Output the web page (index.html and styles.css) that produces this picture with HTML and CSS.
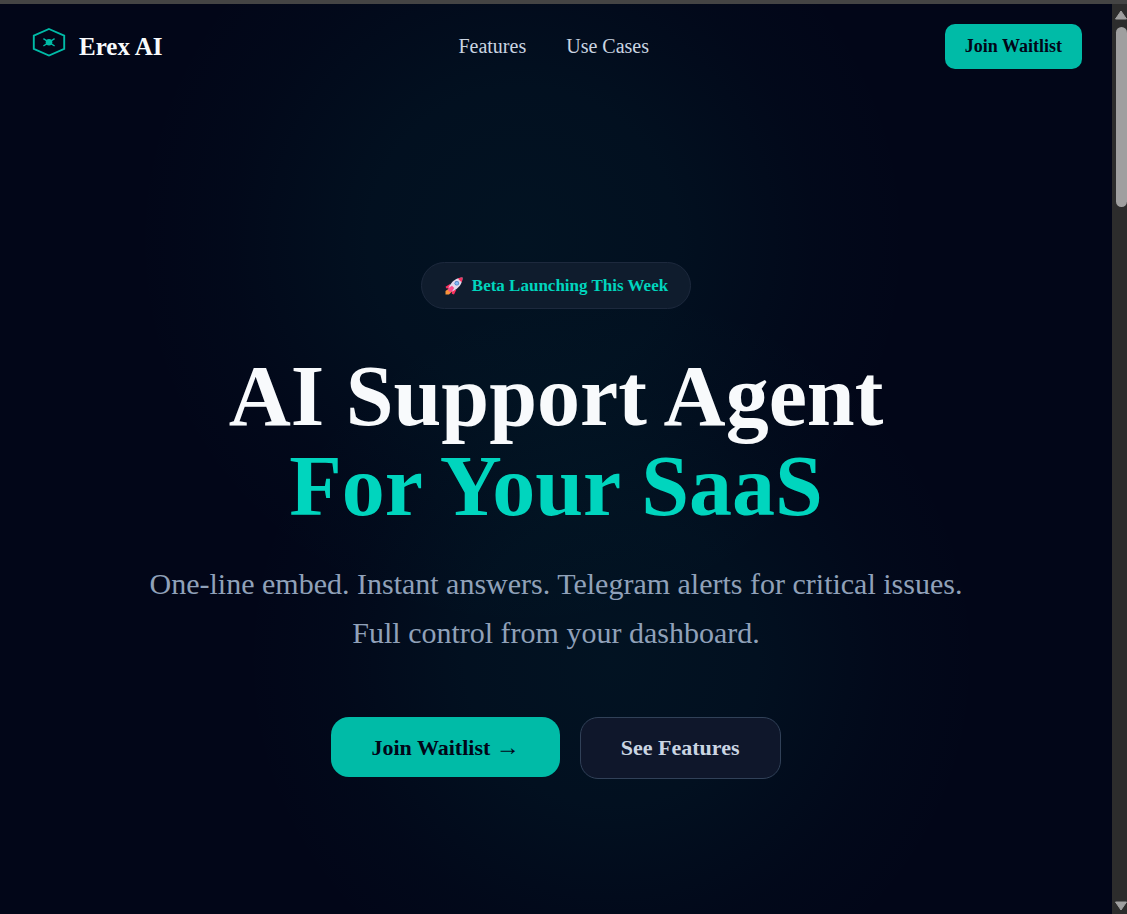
FILE: index.html
```html
<!DOCTYPE html>
<html lang="en">
<head>
    <meta charset="UTF-8">
    <meta name="viewport" content="width=device-width, initial-scale=1.0">
    <title>Erex AI</title>
    <link rel="stylesheet" href="styles.css">
</head>
<body>
    <div class="window">
        <div class="page">
            <header class="navbar">
                <a class="brand" href="#">
                    <svg class="brand-icon" viewBox="0 0 38 44" fill="none" stroke="#00bba7" aria-hidden="true">
                        <path d="M19 4 L34.2 10.6 V23.9 L19 30.5 L3.8 23.9 V10.6 Z" stroke-width="1.9"/>
                        <circle cx="19" cy="17.3" r="3.3" fill="#00bba7" stroke="none"/>
                        <path d="M13.4 13.6 L24.6 21 M24.6 13.6 L13.4 21" stroke-width="1.4"/>
                    </svg>
                    <span>Erex AI</span>
                </a>
                <nav class="nav-links">
                    <a href="#features">Features</a>
                    <a href="#use-cases">Use Cases</a>
                </nav>
                <button class="btn btn-small" type="button">Join Waitlist</button>
            </header>

            <main class="hero">
                <div class="badge">
                    <svg class="rocket" viewBox="0 0 20 20" aria-hidden="true">
                        <path d="M1.5 15 L5 12.5 L8 15.5 L5 18.5 H1.5 Z" fill="#f7923a"/>
                        <path d="M6 8 L1.5 10.8 L2.5 12.5 L6.5 12 Z M12.2 14 L10 18.5 L7.8 17.8 L8 13.5 Z" fill="#f8315f"/>
                        <path d="M18.5 1.5 C12.5 1.5 7.5 5 4.5 12 L8 15.5 C15 12.5 18.5 7.5 18.5 1.5 Z" fill="#e1d8ec"/>
                        <path d="M18.5 1.5 C16.8 1.5 15.2 1.8 13.8 2.4 L17.6 6.2 C18.2 4.8 18.5 3.2 18.5 1.5 Z" fill="#f8315f"/>
                        <path d="M4.5 12 L8 9.8 L10.2 12 L8 15.5 L5.8 16 L4 14.2 Z" fill="#fb4c8c"/>
                        <circle cx="12.8" cy="7.2" r="2.3" fill="#4c7fc5"/>
                        <circle cx="12.8" cy="7.2" r="1.5" fill="#83bbf5"/>
                    </svg>
                    <span>Beta Launching This Week</span>
                </div>
                <h1>AI Support Agent <span>For Your SaaS</span></h1>
                <p class="lead">One-line embed. Instant answers. Telegram alerts for critical issues. Full control from your dashboard.</p>
                <div class="actions">
                    <button class="btn btn-large" type="button">Join Waitlist <span class="btn-arrow">→</span></button>
                    <button class="btn btn-large btn-outline" type="button">See Features</button>
                </div>
            </main>
        </div>

        <div class="scrollbar" aria-hidden="true">
            <svg class="arrow" viewBox="0 0 12 10"><path d="M6 1 L11.5 9 H0.5 Z" fill="#9f9f9f" stroke="#9f9f9f" stroke-linejoin="round"/></svg>
            <div class="thumb"></div>
            <svg class="arrow arrow-down" viewBox="0 0 12 10"><path d="M6 9 L11.5 1 H0.5 Z" fill="#9f9f9f" stroke="#9f9f9f" stroke-linejoin="round"/></svg>
        </div>
    </div>
</body>
</html>
```
FILE: styles.css
```css
* {
    box-sizing: border-box;
}

body {
    margin: 0;
    font-family: "Liberation Serif", "Times New Roman", serif;
    background: #020618;
    color: #f8fafc;
}

a {
    color: inherit;
    text-decoration: none;
}

.window {
    display: grid;
    grid-template-columns: 1fr 15px;
    min-height: 100vh;
    border-top: 4px solid #444444;
}

.page {
    display: flex;
    flex-direction: column;
    background:
        radial-gradient(circle 390px at 47% 26%, rgba(0, 187, 167, 0.07), rgba(0, 187, 167, 0.055) 40%, rgba(0, 187, 167, 0.015) 75%, transparent),
        radial-gradient(circle 370px at 55% 72%, rgba(0, 187, 167, 0.07), rgba(0, 187, 167, 0.055) 40%, rgba(0, 187, 167, 0.015) 75%, transparent),
        #020618;
}

/* Top bar */
.navbar {
    display: flex;
    justify-content: space-between;
    align-items: center;
    padding: 20px 30px;
}

.brand {
    display: flex;
    align-items: center;
    gap: 11px;
    font-size: 25px;
    font-weight: bold;
}

.brand-icon {
    width: 38px;
    height: 44px;
}

.nav-links {
    display: flex;
    gap: 40px;
    font-size: 20px;
    color: #cad5e2;
}

.btn {
    font-family: inherit;
    font-weight: bold;
    border: none;
    background: #00bba7;
    color: #020618;
    cursor: pointer;
}

.btn-small {
    height: 45px;
    padding: 0 20px;
    border-radius: 10px;
    font-size: 18px;
}

.btn-large {
    height: 60px;
    padding: 0 40px;
    border-radius: 18px;
    font-size: 22px;
}

.btn-arrow {
    font-size: 24px;
    font-weight: normal;
}

.btn-outline {
    height: 62px;
    border: 1px solid #314158;
    background: #0f172b;
    color: #cad5e2;
}

/* Hero */
.hero {
    display: flex;
    flex-direction: column;
    align-items: center;
    padding: 173px 30px 120px;
    text-align: center;
}

.badge {
    display: flex;
    align-items: center;
    gap: 8px;
    height: 47px;
    padding: 0 22px;
    border: 1px solid #1d293d;
    border-radius: 24px;
    background: #0f1c2d;
    color: #00d5be;
    font-size: 17px;
    font-weight: bold;
}

.rocket {
    width: 20px;
    height: 20px;
}

h1 {
    margin: 42px 0 28px;
    font-size: 86px;
    line-height: 90px;
}

h1 span {
    display: block;
    color: #00d5be;
}

.lead {
    max-width: 840px;
    margin: 0 0 60px;
    font-size: 30px;
    line-height: 49px;
    color: #90a1b9;
}

.actions {
    display: flex;
    align-items: flex-start;
    gap: 20px;
}

/* Scrollbar */
.scrollbar {
    display: flex;
    flex-direction: column;
    padding: 6px 0 3px 3px;
    background: #2c2c2c;
}

.arrow {
    width: 12px;
    height: 10px;
}

.thumb {
    height: 180px;
    margin: 7px 0 0 1px;
    border-radius: 6px;
    background: #9f9f9f;
}

.arrow-down {
    margin-top: auto;
}
```
